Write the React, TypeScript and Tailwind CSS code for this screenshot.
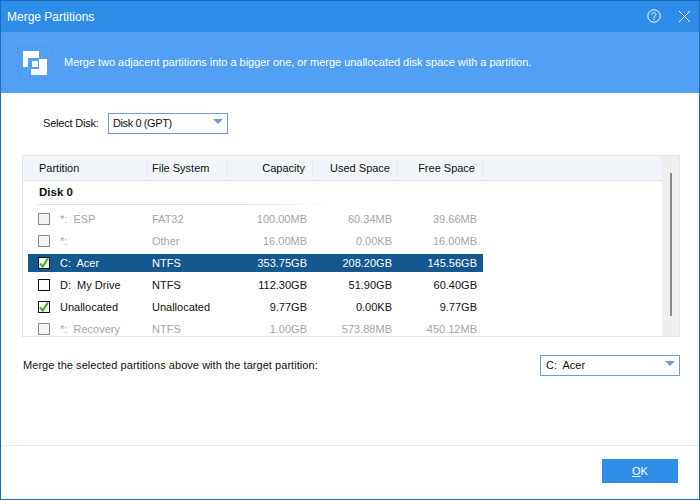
import React from "react";

type Row = {
  name: string;
  fs: string;
  cap: string;
  used: string;
  free: string;
  checked?: boolean;
  disabled?: boolean;
  selected?: boolean;
};

const rows: Row[] = [
  { name: "*:  ESP", fs: "FAT32", cap: "100.00MB", used: "60.34MB", free: "39.66MB", disabled: true },
  { name: "*:", fs: "Other", cap: "16.00MB", used: "0.00KB", free: "16.00MB", disabled: true },
  { name: "C:  Acer", fs: "NTFS", cap: "353.75GB", used: "208.20GB", free: "145.56GB", checked: true, selected: true },
  { name: "D:  My Drive", fs: "NTFS", cap: "112.30GB", used: "51.90GB", free: "60.40GB" },
  { name: "Unallocated", fs: "Unallocated", cap: "9.77GB", used: "0.00KB", free: "9.77GB", checked: true },
  { name: "*:  Recovery", fs: "NTFS", cap: "1.00GB", used: "573.88MB", free: "450.12MB", disabled: true },
];

const Caret = () => (
  <svg width="10" height="5" viewBox="0 0 10 5" className="block">
    <path d="M0 0H10L5 5Z" fill="#6f9bd8" />
  </svg>
);

const CheckBox = ({ checked, disabled }: { checked?: boolean; disabled?: boolean }) => (
  <div
    className={`flex h-[12px] w-[12px] shrink-0 items-center justify-center border ${
      disabled ? "border-[#8a8a8a] bg-[#f4f4f4]" : "border-[#111111] bg-white"
    }`}
  >
    {checked && (
      <svg width="10" height="10" viewBox="0 0 10 10">
        <path d="M1 5.5L3.8 8.5L9 0.5" fill="none" stroke="#3cb521" strokeWidth="2.2" />
      </svg>
    )}
  </div>
);

const HeadCell = ({ label, className }: { label: string; className: string }) => (
  <div className={`flex h-[18px] items-center border-r border-[#e6e9ef] ${className}`}>{label}</div>
);

const App = () => {
  return (
    <div className="flex h-[500px] w-[700px] flex-col overflow-hidden whitespace-pre border border-[#1a6fb8] bg-white font-['Liberation_Sans',sans-serif] text-[11px] text-[#111111]">
      {/* title bar */}
      <div className="flex h-[31px] shrink-0 items-center justify-between bg-[#2e8de8] pl-[6px] pr-[9px] text-white">
        <span className="text-[12px]">Merge Partitions</span>
        <div className="mb-[1px] flex items-center gap-[18px]">
          <svg width="14" height="14" viewBox="0 0 14 14" fill="none" stroke="#fff" strokeWidth="1">
            <circle cx="7" cy="7" r="6.2" />
            <path d="M5 5.5C5 3 9 3 9 5.5C9 7 7 7 7 9" />
            <path d="M7 10V11" />
          </svg>
          <svg width="11" height="11" viewBox="0 0 11 11" stroke="#fff" strokeWidth="1">
            <path d="M0 0L11 11M11 0L0 11" />
          </svg>
        </div>
      </div>

      {/* banner */}
      <div className="flex h-[61px] shrink-0 items-center bg-[#51a0f3] pl-[17px] text-white">
        <svg width="34" height="34" viewBox="0 0 34 34" className="mr-[12px] shrink-0">
          <rect x="1" y="1" width="32" height="32" fill="none" stroke="#4c9bef" strokeWidth="2" strokeDasharray="2 1" />
          <path d="M5 5H21V21H5Z" fill="#fff" />
          <path d="M13 13H29V29H13Z" fill="#fff" />
          <path d="M10 12H21V23H10Z" fill="#51a0f3" />
          <path d="M14 15H20V21H14Z" fill="#fff" />
        </svg>
        <span className="tracking-[-0.03px]">
          Merge two adjacent partitions into a bigger one, or merge unallocated disk space with a partition.
        </span>
      </div>

      {/* disk select */}
      <div className="mt-[20px] flex items-center pl-[42px]">
        <span className="w-[65px] tracking-[-0.2px]">Select Disk:</span>
        <div className="flex h-[21px] w-[120px] items-center justify-between border border-[#6f9bd8] pl-[4px] pr-[4px]">
          <span className="tracking-[-0.4px]">Disk 0 (GPT)</span>
          <div className="mb-[5px]">
            <Caret />
          </div>
        </div>
      </div>

      {/* partition table */}
      <div className="ml-[21px] mt-[21px] flex h-[182px] w-[658px] overflow-hidden border border-[#e1e4ec]">
        <div className="flex-1 overflow-hidden">
          <div className="flex h-[25px] items-center border-b border-[#dde2ea] bg-[#f2f5fa]">
            <HeadCell label="Partition" className="w-[125px] pl-[16px]" />
            <HeadCell label="File System" className="w-[80px] pl-[4px]" />
            <HeadCell label="Capacity" className="w-[85px] justify-end pr-[7px]" />
            <HeadCell label="Used Space" className="w-[85px] justify-end pr-[7px]" />
            <HeadCell label="Free Space" className="w-[85px] justify-end pr-[7px]" />
          </div>
          <div className="ml-[14px] flex h-[23px] items-center pl-[2px] pt-[1px] text-[11.5px] font-bold">Disk 0</div>
          <div className="ml-[14px] h-[1px] w-[298px] bg-gradient-to-r from-[#e0e3e9] from-70% to-transparent" />
          <div className="mt-[5px] flex flex-col gap-[4px]">
            {rows.map((r) => (
              <div
                key={r.name}
                className={`ml-[5px] flex h-[18px] w-[455px] shrink-0 items-center ${
                  r.selected ? "bg-[#14588f] text-white" : r.disabled ? "text-[#a6a6a6]" : ""
                }`}
              >
                <div className="ml-[10px] w-[16px]">
                  <CheckBox checked={r.checked} disabled={r.disabled} />
                </div>
                <span className="ml-[6px] w-[92px]">{r.name}</span>
                <span className="w-[81px]">{r.fs}</span>
                <span className="w-[74px] text-right">{r.cap}</span>
                <span className="w-[85px] text-right">{r.used}</span>
                <span className="w-[85px] text-right">{r.free}</span>
              </div>
            ))}
          </div>
        </div>
        {/* scrollbar */}
        <div className="flex w-[17px] shrink-0 justify-center bg-[#efefef] pt-[17px]">
          <div className="h-[143px] w-[2px] bg-[#8a8a8a]" />
        </div>
      </div>

      {/* target partition */}
      <div className="ml-[22px] mt-[18px] flex w-[657px] items-center justify-between">
        <span className="tracking-[0.05px]">Merge the selected partitions above with the target partition:</span>
        <div className="flex h-[21px] w-[140px] items-center justify-between border border-[#6f9bd8] pl-[5px] pr-[4px]">
          <span>C:  Acer</span>
          <div className="mb-[5px]">
            <Caret />
          </div>
        </div>
      </div>

      {/* footer */}
      <div className="mt-auto flex h-[54px] shrink-0 items-start justify-end border-t border-[#e8e8ee] pr-[21px] pt-[13px]">
        <button className="flex h-[24px] w-[76px] items-center justify-center bg-[#318ee8] text-white">
          <span>
            <span className="underline">O</span>K
          </span>
        </button>
      </div>
    </div>
  );
};

export default App;
